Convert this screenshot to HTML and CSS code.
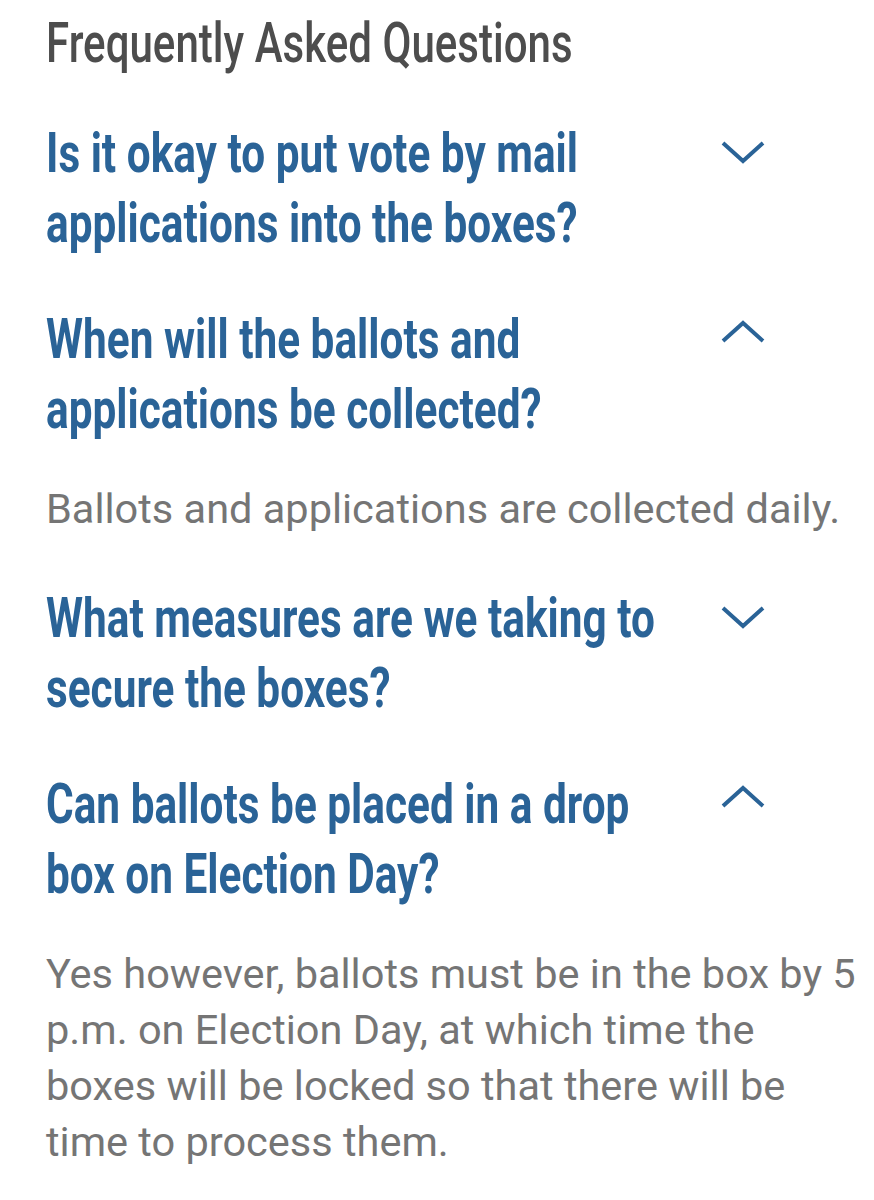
FILE: index.html
```html
<!DOCTYPE html>
<html lang="en">
<head>
<meta charset="utf-8">
<title>FAQ</title>
<link rel="stylesheet" href="styles.css">
</head>
<body>
<main class="faq">
  <h2 class="faq-title"><span class="title-text">Frequently Asked Questions</span></h2>

  <div class="faq-list">
    <section class="faq-item">
      <div class="faq-q">
        <div class="q-box"><span class="q-text">Is it okay to put vote by mail applications into the boxes?</span></div>
        <svg class="chev" viewBox="0 0 44 32" width="44" height="32"><path d="M2 9 L22 27 L42 9" /></svg>
      </div>
    </section>

    <section class="faq-item open">
      <div class="faq-q">
        <div class="q-box"><span class="q-text">When will the ballots and applications be collected?</span></div>
        <svg class="chev" viewBox="0 0 44 32" width="44" height="32"><path d="M2 21 L22 3 L42 21" /></svg>
      </div>
      <p class="faq-a">Ballots and applications are collected daily.</p>
    </section>

    <section class="faq-item">
      <div class="faq-q">
        <div class="q-box"><span class="q-text">What measures are we taking to secure the boxes?</span></div>
        <svg class="chev" viewBox="0 0 44 32" width="44" height="32"><path d="M2 9 L22 27 L42 9" /></svg>
      </div>
    </section>

    <section class="faq-item open">
      <div class="faq-q">
        <div class="q-box"><span class="q-text">Can ballots be placed in a drop box on Election Day?</span></div>
        <svg class="chev" viewBox="0 0 44 32" width="44" height="32"><path d="M2 21 L22 3 L42 21" /></svg>
      </div>
      <p class="faq-a">Yes however, ballots must be in the box by 5 p.m. on Election Day, at which time the boxes will be locked so that there will be time to process them.</p>
    </section>
  </div>
</main>
</body>
</html>
```

FILE: styles.css
```css
html, body {
  margin: 0;
  padding: 0;
  background: #ffffff;
}

.faq {
  --sx: 0.77;
  padding: 8px 0 0 46px;
}

.faq-title {
  margin: 0;
  font-family: Roboto, "Noto Sans", sans-serif;
  font-weight: 500;
  font-size: 55px;
  line-height: 70px;
  color: #4d4d4d;
  white-space: nowrap;
}

.title-text {
  display: inline-block;
  transform: scaleX(0.765);
  transform-origin: 0 0;
}

.faq-list {
  display: flex;
  flex-direction: column;
  gap: 46px;
  margin-top: 40px;
}

.faq-q {
  display: flex;
  align-items: flex-start;
  width: 719px;
}

.q-box {
  flex: none;
  width: 660px;
}

.q-text {
  display: block;
  width: calc(660px / var(--sx));
  transform: scaleX(var(--sx));
  transform-origin: 0 0;
  font-family: Roboto, "Noto Sans", sans-serif;
  font-weight: 700;
  font-size: 55px;
  line-height: 70px;
  color: #2a6397;
}

.chev {
  flex: none;
  margin-left: auto;
  margin-top: 16px;
  fill: none;
  stroke: #2a6397;
  stroke-width: 4;
}

.faq-a {
  margin: 37px 0 0 0;
  font-family: Roboto, "Noto Sans", sans-serif;
  font-weight: 400;
  font-size: 41.5px;
  line-height: 56px;
  color: #757575;
}
```
